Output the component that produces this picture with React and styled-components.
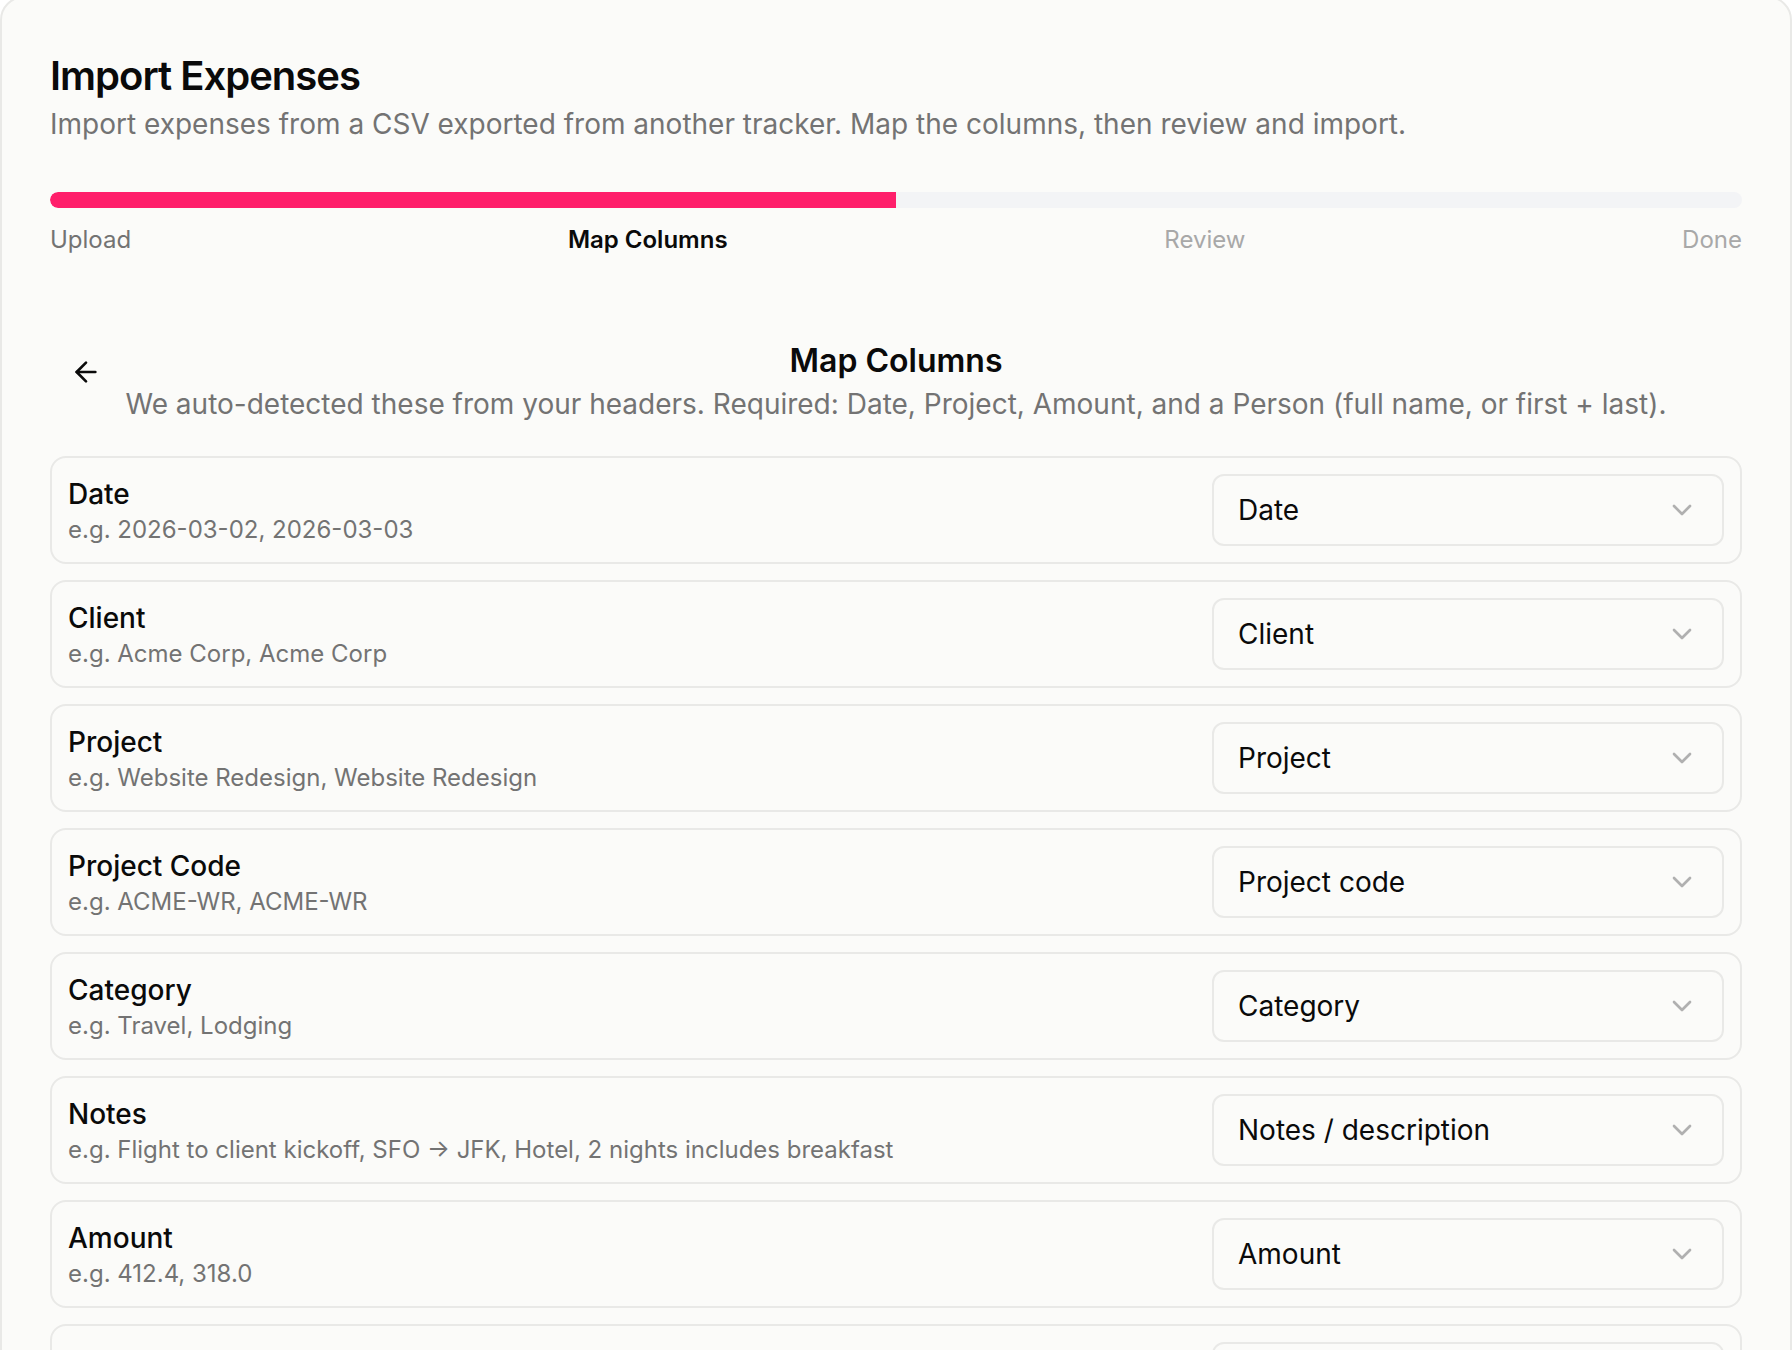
import React from "react";
import styled, { createGlobalStyle } from "styled-components";
import { ArrowLeft, ChevronDown } from "lucide-react";

const GlobalStyle = createGlobalStyle`
  html, body {
    margin: 0;
    height: 100%;
    overflow: hidden;
    background: #ffffff;
  }
  * {
    box-sizing: border-box;
  }
  body {
    font-family: Inter, "Liberation Sans", sans-serif;
    color: #0a0a0a;
  }
`;

const Card = styled.div`
  width: 1792px;
  margin-top: -4px;
  padding: 52px 48px 48px;
  background: #fbfbf9;
  border: 2px solid #e9e9e7;
  border-radius: 24px;
`;

const Title = styled.h1`
  margin: 0;
  font-size: 40px;
  line-height: 52px;
  font-weight: 600;
  letter-spacing: -1px;
`;

const Subtitle = styled.p`
  margin: 0;
  font-size: 28px;
  line-height: 44px;
  color: #737373;
`;

const Track = styled.div`
  margin-top: 46px;
  height: 16px;
  border-radius: 8px;
  background: #f3f4f6;
  overflow: hidden;
`;

const Fill = styled.div`
  height: 100%;
  background: #ff1f6b;
  border-radius: 8px 0 0 8px;
`;

const Steps = styled.div`
  display: flex;
  justify-content: space-between;
  margin-top: 15px;
`;

const Step = styled.span`
  font-size: 24px;
  line-height: 34px;
  font-weight: ${(p) => (p.$state === "active" ? 600 : 400)};
  color: ${(p) =>
    p.$state === "active" ? "#0a0a0a" : p.$state === "todo" ? "#a8a8a8" : "#737373"};
`;

const Header = styled.div`
  display: grid;
  grid-template-columns: 1fr auto 1fr;
  margin-top: 79px;
`;

const BackButton = styled.button`
  justify-self: start;
  width: 72px;
  height: 72px;
  padding: 20px;
  border: 0;
  background: transparent;
  color: #0a0a0a;
  display: flex;
  align-items: center;
  justify-content: center;
`;

const HeaderText = styled.div`
  text-align: center;
`;

const Heading = styled.h2`
  margin: 0;
  font-size: 32px;
  line-height: 50px;
  font-weight: 600;
`;

const HeaderDesc = styled.p`
  margin: 0;
  font-size: 28px;
  line-height: 36px;
  color: #737373;
`;

const Rows = styled.div`
  display: flex;
  flex-direction: column;
  gap: 16px;
  margin-top: 34px;
`;

const Row = styled.div`
  display: flex;
  align-items: center;
  justify-content: space-between;
  padding: 16px;
  border: 2px solid #e9e9e7;
  border-radius: 16px;
`;

const Label = styled.div`
  font-size: 28px;
  line-height: 40px;
  font-weight: 500;
`;

const Sample = styled.div`
  font-size: 24px;
  line-height: 32px;
  color: #737373;
`;

const Select = styled.div`
  width: 512px;
  height: 72px;
  padding: 0 24px;
  display: flex;
  align-items: center;
  justify-content: space-between;
  border: 2px solid #e9e9e7;
  border-radius: 12px;
  font-size: 28px;
  color: #0a0a0a;
  svg {
    margin-left: auto;
    color: #b0b0b0;
  }
`;

const mappings = [
  { label: "Date", sample: "e.g. 2026-03-02, 2026-03-03", value: "Date" },
  { label: "Client", sample: "e.g. Acme Corp, Acme Corp", value: "Client" },
  { label: "Project", sample: "e.g. Website Redesign, Website Redesign", value: "Project" },
  { label: "Project Code", sample: "e.g. ACME-WR, ACME-WR", value: "Project code" },
  { label: "Category", sample: "e.g. Travel, Lodging", value: "Category" },
  {
    label: "Notes",
    sample: "e.g. Flight to client kickoff, SFO → JFK, Hotel, 2 nights includes breakfast",
    value: "Notes / description",
  },
  { label: "Amount", sample: "e.g. 412.4, 318.0", value: "Amount" },
  // last row is cut off by the frame, only its top edge shows
  { label: "", sample: "", value: "" },
];

const steps = [
  { name: "Upload", state: "done" },
  { name: "Map Columns", state: "active" },
  { name: "Review", state: "todo" },
  { name: "Done", state: "todo" },
];

export default function App() {
  return (
    <>
      <GlobalStyle />
      <Card>
        <Title>Import Expenses</Title>
        <Subtitle>
          Import expenses from a CSV exported from another tracker. Map the columns, then review and
          import.
        </Subtitle>
        <Track>
          <Fill style={{ width: "50%" }} />
        </Track>
        <Steps>
          {steps.map((s) => (
            <Step key={s.name} $state={s.state}>
              {s.name}
            </Step>
          ))}
        </Steps>
        <Header>
          <BackButton aria-label="Back">
            <ArrowLeft size={32} strokeWidth={2} />
          </BackButton>
          <HeaderText>
            <Heading>Map Columns</Heading>
            <HeaderDesc>
              We auto-detected these from your headers. Required: Date, Project, Amount, and a
              Person (full name, or first + last).
            </HeaderDesc>
          </HeaderText>
          <div />
        </Header>
        <Rows>
          {mappings.map((m, i) => (
            <Row key={i}>
              <div>
                <Label>{m.label}</Label>
                <Sample>{m.sample}</Sample>
              </div>
              <Select>
                {m.value}
                <ChevronDown size={32} strokeWidth={2} />
              </Select>
            </Row>
          ))}
        </Rows>
      </Card>
    </>
  );
}
